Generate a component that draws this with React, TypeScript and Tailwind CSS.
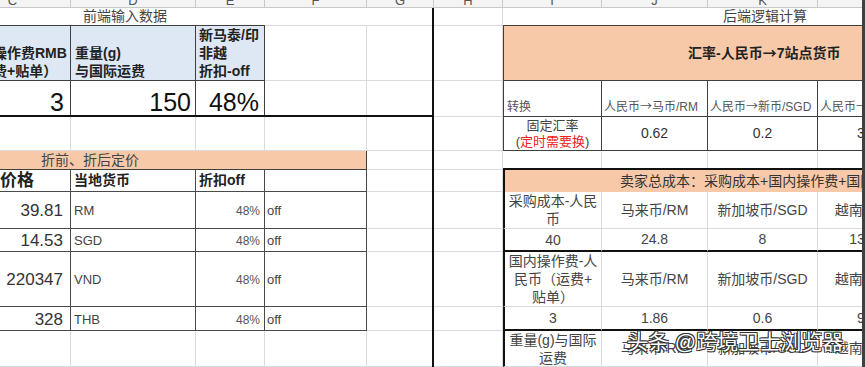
import React from "react";

const FONT = "font-['Liberation_Sans','Noto_Sans_CJK_SC',sans-serif]";

const COLS = [
  "col-start-1",
  "col-start-2",
  "col-start-3",
  "col-start-4",
  "col-start-5",
  "col-start-6",
  "col-start-7",
  "col-start-8",
  "col-start-9",
  "col-start-10",
];

const ROWS = [
  "row-start-1",
  "row-start-2",
  "row-start-3",
  "row-start-4",
  "row-start-5",
  "row-start-6",
  "row-start-7",
  "row-start-8",
  "row-start-9",
  "row-start-10",
  "row-start-11",
  "row-start-12",
];

const LETTERS = ["C", "D", "E", "F", "G", "H", "I", "J", "K", "L"];

const prices = [
  { row: "row-start-8", price: "39.81", cur: "RM" },
  { row: "row-start-9", price: "14.53", cur: "SGD" },
  { row: "row-start-10", price: "220347", cur: "VND" },
  { row: "row-start-11", price: "328", cur: "THB" },
];

const costRows = [
  { row: "row-start-8", thick: false, label: ["采购成本-人民", "币"], cells: ["马来币/RM", "新加坡币/SGD", "越南盾/VND"] },
  { row: "row-start-9", thick: true, label: ["40"], cells: ["24.8", "8", "132000"] },
  {
    row: "row-start-10",
    thick: false,
    label: ["国内操作费-人", "民币（运费+", "贴单）"],
    cells: ["马来币/RM", "新加坡币/SGD", "越南盾/VND"],
  },
  { row: "row-start-11", thick: true, label: ["3"], cells: ["1.86", "0.6", "9900"] },
  { row: "row-start-12", thick: false, label: ["重量(g)与国际", "运费"], cells: ["马来币/RM", "新加坡币/SGD", "越南盾/VND"] },
];

const rates = [
  { col: "col-start-8", to: "马币/RM", value: "0.62" },
  { col: "col-start-9", to: "新币/SGD", value: "0.2" },
  { col: "col-start-10", to: "越南盾/VND", value: "3300" },
];

function Arrow() {
  return <span className="font-['Noto_Sans_CJK_SC',sans-serif]">→</span>;
}

export default function App() {
  return (
    <div className={`flex h-[367px] w-[865px] overflow-hidden bg-white ${FONT}`}>
      <div className="relative flex-1 overflow-hidden">
        <div className="ml-[-45px] grid grid-cols-[116px_125px_69px_102px_67px_69px_99px_106px_110px_110px] grid-rows-[8px_18px_55px_36px_34px_19px_22px_37px_23px_55px_24px_36px]">
          {/* column letters, only their lower half shows */}
          {LETTERS.map((l, i) => (
            <div
              key={l}
              className={`${COLS[i]} row-start-1 overflow-hidden border-r border-b border-[#c8c8c8] bg-[#f4f4f4] text-center text-[13px] leading-[13px] text-[#555]`}
            >
              <span className="-mt-[6px] block">{l}</span>
            </div>
          ))}

          {/* plain sheet gridlines */}
          {ROWS.slice(1).map((r) =>
            COLS.map((c) => <div key={r + c} className={`${c} ${r} border-r border-b border-[#d8dbe0]`} />)
          )}

          {/* 前端输入数据 */}
          <div className="col-start-1 col-end-6 row-start-2 flex items-center bg-white border-b border-[#d8dbe0] pl-[128px] text-[14px] text-[#444]">
            前端输入数据
          </div>
          <div className="col-start-1 col-end-4 row-start-2 border-b border-[#3f3f3f]" />

          <div className="col-start-1 row-start-3 flex flex-col justify-end overflow-hidden whitespace-nowrap bg-[#dde8f4] border-r border-b border-[#3f3f3f] pl-[10px] text-[14px] font-bold leading-[18px] text-[#222]">
            <span>国内操作费RMB</span>
            <span>（运费+贴单）</span>
          </div>
          <div className="col-start-2 row-start-3 flex flex-col justify-end bg-[#dde8f4] border-r border-b border-[#3f3f3f] pl-[4px] text-[14px] font-bold leading-[18px] text-[#222]">
            <span>重量(g)</span>
            <span>与国际运费</span>
          </div>
          <div className="col-start-3 row-start-3 flex flex-col justify-end whitespace-nowrap bg-[#dde8f4] border-r border-b border-[#3f3f3f] pl-[3px] text-[14px] font-bold leading-[18px] text-[#222]">
            <span>新马泰/印</span>
            <span>非越</span>
            <span>折扣-off</span>
          </div>

          <div className="col-start-1 row-start-4 flex items-end justify-end bg-white border-r border-[#3f3f3f] pr-[6px] text-[25px] leading-[30px] text-[#111]">
            3
          </div>
          <div className="col-start-2 row-start-4 flex items-end justify-end bg-white border-r border-[#3f3f3f] pr-[4px] text-[25px] leading-[30px] text-[#111]">
            150
          </div>
          <div className="col-start-3 row-start-4 flex items-end justify-end bg-white border-r border-[#3f3f3f] pr-[5px] text-[25px] leading-[30px] text-[#111]">
            48%
          </div>

          {/* 折前、折后定价 */}
          <div className="col-start-1 col-end-5 row-start-6 flex items-center bg-[#f8c9a8] border-r border-b border-[#3f3f3f] pl-[86px] text-[14px] text-[#444]">
            折前、折后定价
          </div>
          <div className="col-start-1 row-start-7 flex items-center bg-white border-r border-b border-[#4a4a4a] pl-[45px] text-[17px] font-bold text-[#222]">
            价格
          </div>
          <div className="col-start-2 row-start-7 flex items-center bg-white border-r border-b border-[#4a4a4a] pl-[3px] text-[14px] font-bold text-[#222]">
            当地货币
          </div>
          <div className="col-start-3 row-start-7 flex items-center bg-white border-r border-b border-[#4a4a4a] pl-[3px] text-[14px] font-bold text-[#222]">
            折扣off
          </div>
          <div className="col-start-4 row-start-7 bg-white border-r border-b border-[#4a4a4a]" />

          {prices.map((p) => (
            <React.Fragment key={p.cur}>
              <div className={`col-start-1 ${p.row} flex items-center justify-end bg-white border-r border-b border-[#4a4a4a] pr-[7px] pt-[2px] text-[17px] text-[#333]`}>
                {p.price}
              </div>
              <div className={`col-start-2 ${p.row} flex items-center bg-white border-r border-b border-[#4a4a4a] pl-[3px] pt-[2px] text-[13px] text-[#444]`}>
                {p.cur}
              </div>
              <div className={`col-start-3 ${p.row} flex items-center justify-end bg-white border-r border-b border-[#4a4a4a] pr-[4px] pt-[2px] text-[12px] text-[#555]`}>
                48%
              </div>
              <div className={`col-start-4 ${p.row} flex items-center bg-white border-r border-b border-[#4a4a4a] pl-[2px] pt-[2px] text-[13px] text-[#444]`}>
                off
              </div>
            </React.Fragment>
          ))}

          {/* 后端逻辑计算 */}
          <div className="col-start-7 col-end-11 row-start-2 flex items-center bg-white border-b border-[#3f3f3f] pl-[220px] text-[14px] text-[#444]">
            后端逻辑计算
          </div>
          <div className="col-start-7 col-end-11 row-start-3 flex items-center bg-[#f8c9a8] border-l border-b border-[#3f3f3f] pl-[184px] text-[14px] font-bold text-[#222]">
            <span>
              汇率-人民币<Arrow />7站点货币
            </span>
          </div>

          <div className="col-start-7 row-start-4 flex items-end bg-white border-l border-r border-b border-[#3f3f3f] pl-[3px] pb-[1px] text-[12px] leading-[16px] text-[#555]">
            转换
          </div>
          <div className="col-start-7 row-start-5 flex flex-col items-center justify-center bg-white border-l border-r border-b border-[#3f3f3f] text-[13px] leading-[16px] text-[#444]">
            <span>固定汇率</span>
            <span>
              (<span className="text-[#f02020]">定时需要换</span>)
            </span>
          </div>
          {rates.map((r) => (
            <React.Fragment key={r.col}>
              <div className={`${r.col} row-start-4 flex items-end whitespace-nowrap bg-white border-r border-b border-[#3f3f3f] pl-[2px] pb-[1px] text-[12px] leading-[16px] text-[#555]`}>
                <span>
                  人民币<Arrow />
                  {r.to}
                </span>
              </div>
              <div className={`${r.col} row-start-5 flex items-center justify-center bg-white border-r border-b border-[#3f3f3f] text-[14px] text-[#333]`}>
                {r.value}
              </div>
            </React.Fragment>
          ))}

          {/* 卖家总成本 */}
          <div className="col-start-7 col-end-11 row-start-6 border-b-2 border-[#111]" />
          <div className="col-start-7 col-end-11 row-start-7 flex items-center whitespace-nowrap bg-[#f8c9a8] border-l-2 border-[#111] pl-[115px] text-[14px] text-[#333]">
            卖家总成本：采购成本+国内操作费+国际运费
          </div>
          {costRows.map((r) => (
            <React.Fragment key={r.row}>
              <div
                className={`col-start-7 ${r.row} flex flex-col items-center justify-center whitespace-nowrap bg-white border-r border-[#d8dbe0] border-l-2 border-l-[#111] ${
                  r.thick ? "border-b-2 border-b-[#111]" : "border-b border-b-[#d8dbe0]"
                } text-[14px] leading-[18px] text-[#444]`}
              >
                {r.label.map((t) => (
                  <span key={t}>{t}</span>
                ))}
              </div>
              {r.cells.map((t, i) => (
                <div
                  key={i}
                  className={`${COLS[7 + i]} ${r.row} flex items-center justify-center whitespace-nowrap bg-white border-r border-[#d8dbe0] ${
                    r.thick ? "border-b-2 border-b-[#111]" : "border-b border-b-[#d8dbe0]"
                  } text-[14px] text-[#444]`}
                >
                  {t}
                </div>
              ))}
            </React.Fragment>
          ))}

          {/* heavy rules */}
          <div className="pointer-events-none col-start-1 col-end-6 row-start-4 border-b-2 border-[#111]" />
          <div className="pointer-events-none col-start-5 row-start-2 row-end-13 border-r-2 border-[#111]" />
        </div>

        <div className="pointer-events-none absolute left-[627px] top-[330px] whitespace-nowrap text-[21px] leading-[24px] text-white [text-shadow:1px_1px_0_#333,-1px_-1px_0_#333,1px_-1px_0_#333,-1px_1px_0_#333]">
          头条 @跨境卫士浏览器
        </div>
      </div>
      <div className="w-[3px] bg-[#404040]" />
    </div>
  );
}
